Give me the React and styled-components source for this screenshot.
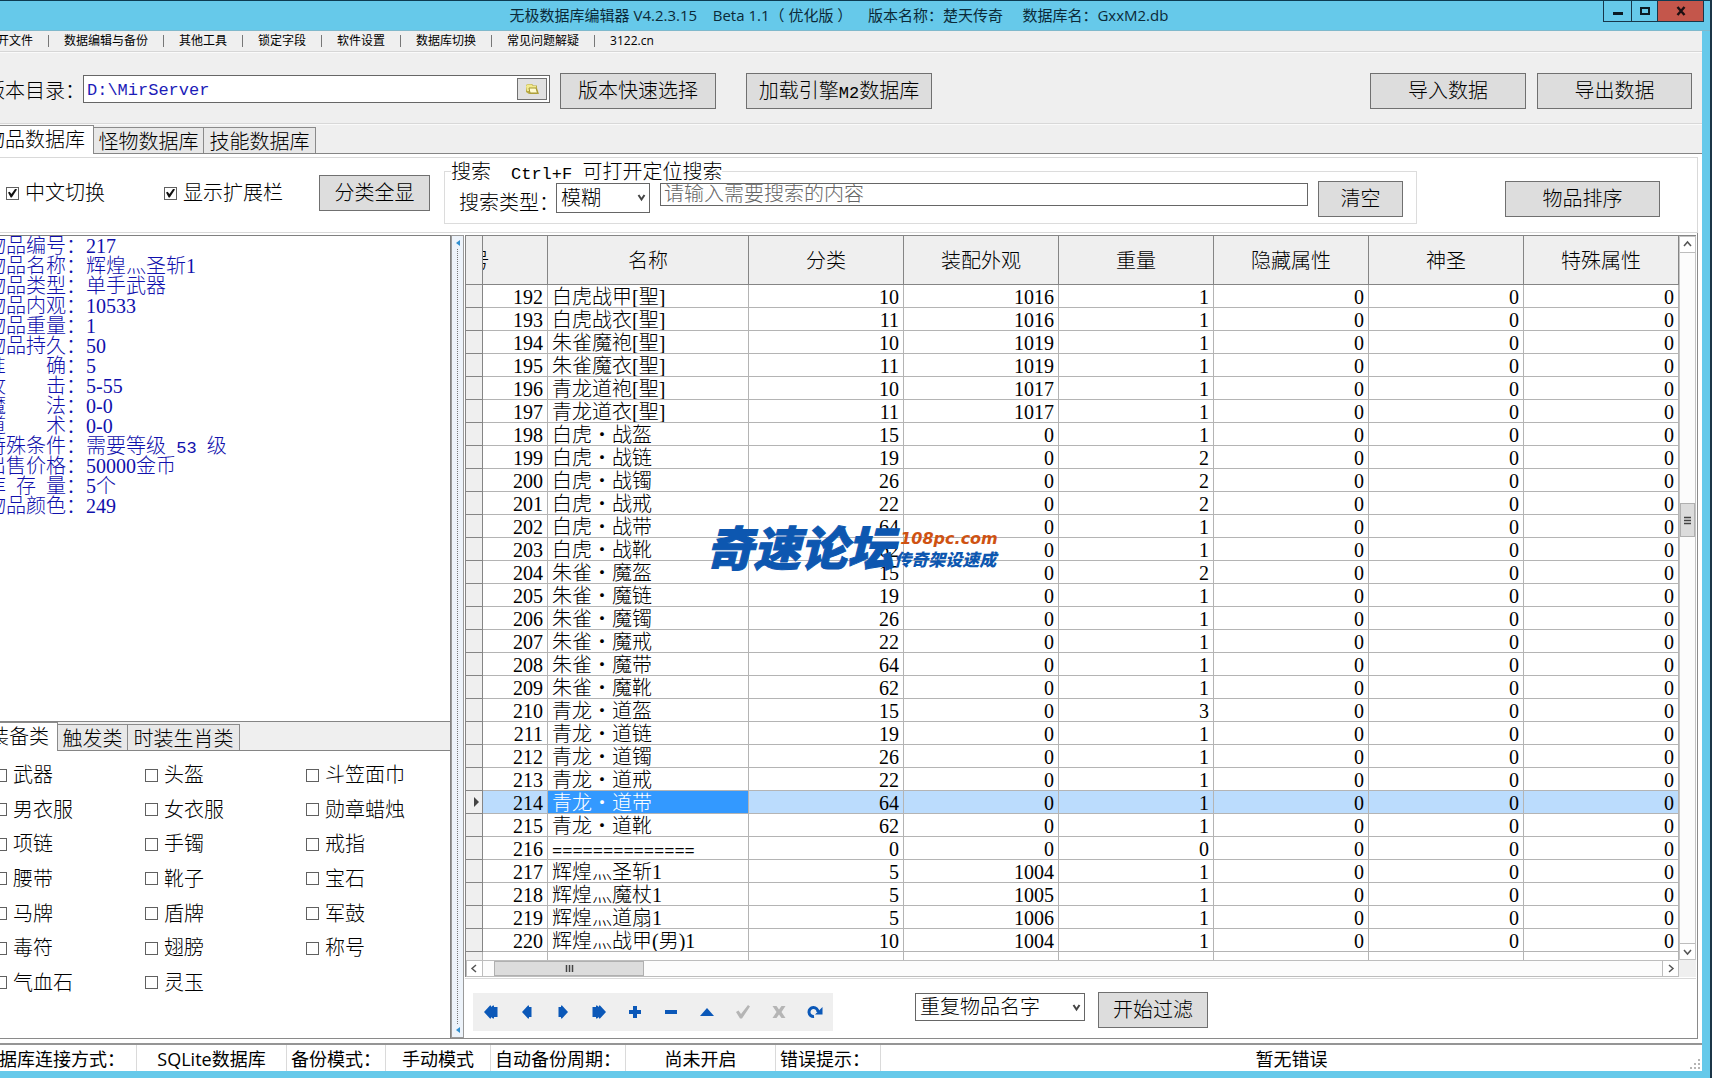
import React, { useState } from 'react';
import styled, { createGlobalStyle, css } from 'styled-components';

const song = '"Liberation Serif", "Noto Sans CJK SC", serif';
const ui = '"Open Sans", "Noto Sans CJK SC", sans-serif';
const mono = '"Liberation Mono", "Noto Sans CJK SC", monospace';

const GlobalStyle = createGlobalStyle`
  * { box-sizing: border-box; }
  body { margin: 0; background: #1b3547; overflow: hidden; }
  button, input, select { font: inherit; color: inherit; margin: 0; border-radius: 0; }
`;

/* ---------- window frame ---------- */

const Desktop = styled.div`
  position: relative;
  height: 100vh;
  padding-right: 2px;
  overflow: hidden;
  font: 300 20px/20px ${song};
  color: #000;
`;

const Frame = styled.div`
  display: flex;
  flex-direction: column;
  height: 100%;
  margin-left: -20px;
  padding: 0 8px 7px 0;
  background: #66c9ea;
  border-top: 1px solid #0d3b52;
`;

const TitleBar = styled.header`
  display: flex;
  flex: 0 0 30px;
  align-items: flex-start;
  margin-right: -8px;
  padding-right: 6px;
  border-bottom: 1px solid #7fb9cc;
`;

const Title = styled.h1`
  flex: 1;
  margin: 0;
  padding-left: 94px;
  font: 400 15px/29px ${ui};
  text-align: center;
  white-space: pre;
  color: #0b2a38;
`;

const WindowButton = styled.button`
  display: grid;
  place-items: center;
  width: ${(p) => p.$width}px;
  height: 21px;
  padding: 0;
  border: solid #17364a;
  border-width: 0 1px 1px;
  margin-left: -1px;
  background: ${(p) => (p.$danger ? '#c4564b' : 'transparent')};
`;

const Client = styled.div`
  display: flex;
  flex: 1;
  flex-direction: column;
  min-height: 0;
  background: #efefef;
`;

const MenuBar = styled.nav`
  display: flex;
  flex: 0 0 21px;
  align-items: center;
  padding-left: 5px;
  border-bottom: 1px solid #d6d6d6;
  font: 400 12px/20px ${ui};
`;

const MenuItem = styled.a`
  color: #000;
  text-decoration: none;
  white-space: nowrap;
  & + & {
    display: flex;
    align-items: center;
  }
  & + &::before {
    content: '';
    width: 1px;
    height: 12px;
    margin: 0 15px;
    background: #777;
  }
`;

/* ---------- common controls ---------- */

const Button = styled.button`
  flex: none;
  width: ${(p) => p.$width}px;
  height: 36px;
  padding: 0;
  border: 1px solid #707070;
  background: #dddddd;
  white-space: nowrap;
`;

const Mono = styled.span`
  font-family: ${mono};
  font-size: 17px;
  line-height: 0;
  white-space: pre;
`;

const Check = styled.label`
  display: flex;
  align-items: center;
  gap: 6px;
  white-space: nowrap;
`;

const Box = styled.input.attrs({ type: 'checkbox' })`
  appearance: none;
  display: grid;
  place-items: center;
  width: 13px;
  height: 13px;
  border: 1px solid #606060;
  background: #fff;
  &:checked::after {
    content: '';
    width: 9px;
    height: 9px;
    background: #111;
    clip-path: polygon(0 45%, 18% 35%, 38% 62%, 82% 0, 100% 10%, 42% 100%, 30% 100%);
  }
`;

const SelectBox = styled.span`
  display: grid;
  align-items: center;
  flex: none;
  width: ${(p) => p.$width}px;
  height: ${(p) => p.$height}px;
  select {
    grid-area: 1 / 1;
    appearance: none;
    width: 100%;
    height: 100%;
    padding: 0 20px 0 4px;
    border: 1px solid #666;
    background: #fff;
  }
  svg {
    grid-area: 1 / 1;
    justify-self: end;
    margin-right: 4px;
    pointer-events: none;
  }
`;

function Select({ width, height, label, options, id }) {
  return (
    <SelectBox $width={width} $height={height}>
      <select id={id} aria-label={label}>
        {options.map((o) => (
          <option key={o}>{o}</option>
        ))}
      </select>
      <svg width="9" height="9" viewBox="0 0 9 9" fill="none" stroke="#444" strokeWidth="2">
        <path d="M1.5 2 L4.5 6.5 L7.5 2" />
      </svg>
    </SelectBox>
  );
}

/* ---------- path row ---------- */

const Toolbar = styled.div`
  display: flex;
  flex: 0 0 72px;
  align-items: center;
  padding: 5px 10px 0 5px;
  border-top: 1px solid #fafafa;
  border-bottom: 1px solid #d8d8d8;
`;

const PathLabel = styled.label`
  flex: 0 0 98px;
  min-width: 0;
  white-space: nowrap;
`;

const PathField = styled.div`
  display: flex;
  flex: 0 0 467px;
  align-items: center;
  height: 28px;
  margin: 0 10px 4px 0;
  padding-right: 2px;
  border: 1px solid #666;
  background: #fff;
  input {
    flex: 1;
    min-width: 0;
    padding: 4px 3px 0;
    border: 0;
    outline: 0;
    font: 400 17px/20px ${mono};
    color: #1c1cb8;
  }
`;

const BrowseButton = styled.button`
  display: grid;
  place-items: center;
  width: 30px;
  height: 22px;
  padding: 0;
  border: 1px solid #707070;
  background: #e1e1e1;
`;

const Spacer = styled.div`
  flex: ${(p) => (p.$width ? `0 0 ${p.$width}px` : '1')};
`;

/* ---------- tabs ---------- */

const Tabs = styled.div`
  display: flex;
  flex: 0 0 30px;
  align-items: flex-end;
  border-bottom: 1px solid #858585;
  border-top: 1px solid ${(p) => (p.$sub ? '#858585' : '#fafafa')};
  background: #efefef;
`;

const Tab = styled.button`
  width: ${(p) => p.$width}px;
  height: 26px;
  padding: 2px 0 0;
  border: solid #8a8a8a;
  border-width: 1px 1px 0 0;
  background: #e8e8e8;
  text-align: center;
  white-space: nowrap;
  ${(p) =>
    p.$active &&
    css`
      height: 29px;
      margin-bottom: -1px;
      padding: 0 8px 1px 0;
      background: #fff;
      text-align: right;
    `}
`;

/* ---------- search panel ---------- */

const Page = styled.main`
  display: flex;
  flex: 1;
  flex-direction: column;
  min-height: 0;
  padding: 3px 4px 4px 0;
  background: #fff;
`;

const SearchPanel = styled.section`
  display: flex;
  flex: 0 0 76px;
  align-items: center;
  padding: 0 37px 4px 26px;
  border: solid #d9d9d9;
  border-width: 1px 1px 1px 0;
`;

const SearchGroup = styled.fieldset`
  flex: 1;
  min-width: 0;
  height: 61px;
  margin: 0 88px 0 14px;
  padding: 0 13px 0 6px;
  border: 1px solid #dcdcdc;
  legend {
    padding: 0;
    line-height: 18px;
    white-space: nowrap;
  }
`;

const SearchRow = styled.div`
  display: flex;
  align-items: flex-start;
  padding-left: 8px;
  label {
    flex: 0 0 97px;
    min-width: 0;
    padding-top: 12px;
    white-space: nowrap;
  }
  ${SelectBox} {
    margin-top: 2px;
  }
`;

const SearchInput = styled.input`
  flex: 1;
  min-width: 0;
  height: 23px;
  margin: 2px 10px 0;
  padding: 0 3px;
  border: 1px solid #666;
  &::placeholder {
    color: #666;
    opacity: 1;
  }
`;

const SortSlot = styled.div`
  padding-top: 12px;
`;

/* ---------- body ---------- */

const Workspace = styled.div`
  display: grid;
  flex: 1;
  grid-template-columns: 471px 13px minmax(0, 1fr);
  min-height: 0;
  padding-top: 2px;
  border: solid #8a8a8a;
  border-width: 0 1px 1px 0;
`;

const Side = styled.aside`
  display: flex;
  flex-direction: column;
  min-height: 0;
  border: solid #808080;
  border-width: 1px 1px 0 0;
`;

const Details = styled.dl`
  flex: 1;
  margin: 0;
  padding-left: 6px;
  color: #1010ac;
  div {
    display: flex;
  }
  dt {
    display: flex;
    flex: 0 0 100px;
  }
  dt span {
    width: 80px;
    text-align-last: justify;
  }
  dd {
    margin: 0;
    white-space: nowrap;
  }
`;

const Categories = styled.div`
  display: grid;
  flex: 0 0 287px;
  grid-template-columns: 151px 161px 1fr;
  grid-template-rows: repeat(7, 1fr);
  align-items: center;
  padding: 7px 0 38px 14px;
`;

const Splitter = styled.div`
  display: flex;
  flex-direction: column;
  align-items: center;
  justify-content: space-between;
  padding: 4px 0;
  border: 1px solid #9a9a9a;
  background: #edf3fa;
  &::before,
  &::after {
    content: '';
    border: solid transparent;
    border-width: 3px 4px 3px 0;
    border-right-color: #2f8fd0;
  }
`;

const DottedLine = styled.div`
  flex: 1;
  margin: 3px 0;
  border-left: 1px dotted #777;
`;

const GridPane = styled.section`
  display: flex;
  flex-direction: column;
  min-width: 0;
  min-height: 0;
  padding: 0 1px 0 1px;
`;

const GridArea = styled.div`
  display: grid;
  flex: 1;
  grid-template: minmax(0, 1fr) 17px / minmax(0, 1fr) 17px;
  min-height: 0;
  border-top: 1px solid #858585;
  border-left: 1px solid #858585;
`;

const Viewport = styled.div`
  overflow: hidden;
  background: linear-gradient(#efefef, #efefef) 0 0 / 16px 100% no-repeat;
`;

const Table = styled.table`
  width: 100%;
  table-layout: fixed;
  border-collapse: separate;
  border-spacing: 0;
  th {
    height: 49px;
    padding: 1px 0 0;
    border: solid #858585;
    border-width: 0 1px 1px 0;
    background: #efefef;
    font-weight: inherit;
    overflow: hidden;
    white-space: nowrap;
  }
`;

const Column = styled.col`
  width: ${(p) => (p.$width ? `${p.$width}px` : 'auto')};
`;

const ScrolledHeading = styled.div`
  display: flex;
  justify-content: flex-end;
  overflow: hidden;
  span {
    flex: 0 0 155px;
    text-align: center;
  }
`;

const Cell = styled.td`
  height: 23px;
  padding: 2px 4px 0;
  border: solid #b4b4b4;
  border-width: 0 1px 1px 0;
  background: ${(p) => (p.$selected ? '#bbdcfd' : '#fff')};
  text-align: ${(p) => (p.$text ? 'left' : 'right')};
  line-height: 20px;
  white-space: nowrap;
  overflow: hidden;
  ${(p) =>
    p.$focused &&
    css`
      background: #3399ff;
      color: #fff;
    `}
`;

const Indicator = styled(Cell)`
  padding: 0 0 0 8px;
  border-color: #858585;
  background: #efefef;
  svg {
    display: block;
  }
`;

const Tail = styled.td`
  height: 8px;
  padding: 0;
  border-right: 1px solid #b4b4b4;
`;

const VScroll = styled.div`
  display: flex;
  flex-direction: column;
  border: 1px solid #c4c4c4;
  background: #fcfcfc;
`;

const HScroll = styled.div`
  display: flex;
  border: 1px solid #bdbdbd;
  background: #fcfcfc;
`;

const ScrollButton = styled.button`
  display: grid;
  flex: 0 0 16px;
  place-items: center;
  padding: 0;
  border: 0 solid #bdbdbd;
  border-width: ${(p) => p.$edge};
  background: #fff;
`;

const Thumb = styled.div`
  display: grid;
  flex: 0 0 ${(p) => p.$size}px;
  place-items: center;
  border: 1px solid #b0b0b0;
  background: #dcdcdc;
`;

const Corner = styled.div`
  background: #efefef;
`;

const Footer = styled.div`
  display: flex;
  flex: 0 0 60px;
  align-items: flex-start;
  margin-top: 1px;
  padding: 13px 0 0 8px;
  border-top: 1px solid #d9d9d9;
`;

const Navigator = styled.div`
  display: flex;
  flex: none;
  margin: 1px 82px 0 0;
  background: #efefef;
`;

const NavButton = styled.button`
  display: grid;
  place-items: center;
  width: 36px;
  height: 38px;
  padding: 0;
  border: 0;
  background: transparent;
  color: ${(p) => (p.disabled ? '#b5b5b5' : '#0b58b8')};
`;

const FilterSlot = styled.div`
  padding: 1px 13px 0 0;
`;

/* ---------- status bar ---------- */

const StatusBar = styled.footer`
  display: flex;
  flex: 0 0 28px;
  min-height: 0;
  border-top: 2px solid #959595;
  background: #fff;
  font: 400 18px/28px ${ui};
`;

const StatusCell = styled.div`
  flex: ${(p) => (p.$width ? `0 0 ${p.$width}px` : '1')};
  padding-left: ${(p) => (p.$center ? 0 : p.$first ? 1 : 4)}px;
  border-right: ${(p) => (p.$width ? '1px solid #dadada' : '0')};
  text-align: ${(p) => (p.$center ? 'center' : 'left')};
  white-space: nowrap;
  overflow: hidden;
`;

const Grip = styled.svg`
  align-self: flex-end;
  flex: none;
  margin-left: -12px;
`;

/* ---------- watermark ---------- */

const Watermark = styled.div`
  position: absolute;
  top: 50%;
  left: 50%;
  display: flex;
  align-items: center;
  transform: translate(-50%, -17px);
  padding-right: 8px;
  font-family: "Noto Sans CJK SC", sans-serif;
  font-weight: 900;
  font-style: italic;
  color: #0d57b0;
  white-space: nowrap;
  pointer-events: none;
`;

const MarkName = styled.strong`
  font-size: 47px;
  line-height: 48px;
  font-weight: 900;
  -webkit-text-stroke: 1px #0d57b0;
`;

const MarkSide = styled.div`
  padding-top: 6px;
  font-size: 17px;
  line-height: 20px;
  b {
    display: block;
    padding-left: 6px;
    font: italic 700 16px/20px "DejaVu Sans", sans-serif;
    color: #cf5212;
  }
`;

/* ---------- data ---------- */

const menu = ['打开文件', '数据编辑与备份', '其他工具', '锁定字段', '软件设置', '数据库切换', '常见问题解疑', '3122.cn'];

const details = [
  ['物品编号', '217'],
  ['物品名称', '辉煌灬圣斩1'],
  ['物品类型', '单手武器'],
  ['物品内观', '10533'],
  ['物品重量', '1'],
  ['物品持久', '50'],
  ['准 确', '5'],
  ['攻 击', '5-55'],
  ['魔 法', '0-0'],
  ['道 术', '0-0'],
  ['特殊条件', <>需要等级<Mono> 53 </Mono>级</>],
  ['出售价格', '50000金币'],
  ['库 存 量', '5个'],
  ['物品颜色', '249'],
];

const categories = [
  '武器', '头盔', '斗笠面巾',
  '男衣服', '女衣服', '勋章蜡烛',
  '项链', '手镯', '戒指',
  '腰带', '靴子', '宝石',
  '马牌', '盾牌', '军鼓',
  '毒符', '翅膀', '称号',
  '气血石', '灵玉',
];

const headings = ['名称', '分类', '装配外观', '重量', '隐藏属性', '神圣', '特殊属性'];

const items = [
  ['白虎战甲[聖]', 10, 1016, 1],
  ['白虎战衣[聖]', 11, 1016, 1],
  ['朱雀魔袍[聖]', 10, 1019, 1],
  ['朱雀魔衣[聖]', 11, 1019, 1],
  ['青龙道袍[聖]', 10, 1017, 1],
  ['青龙道衣[聖]', 11, 1017, 1],
  ['白虎・战盔', 15, 0, 1],
  ['白虎・战链', 19, 0, 2],
  ['白虎・战镯', 26, 0, 2],
  ['白虎・战戒', 22, 0, 2],
  ['白虎・战带', 64, 0, 1],
  ['白虎・战靴', 62, 0, 1],
  ['朱雀・魔盔', 15, 0, 2],
  ['朱雀・魔链', 19, 0, 1],
  ['朱雀・魔镯', 26, 0, 1],
  ['朱雀・魔戒', 22, 0, 1],
  ['朱雀・魔带', 64, 0, 1],
  ['朱雀・魔靴', 62, 0, 1],
  ['青龙・道盔', 15, 0, 3],
  ['青龙・道链', 19, 0, 1],
  ['青龙・道镯', 26, 0, 1],
  ['青龙・道戒', 22, 0, 1],
  ['青龙・道带', 64, 0, 1],
  ['青龙・道靴', 62, 0, 1],
  ['==============', 0, 0, 0],
  ['辉煌灬圣斩1', 5, 1004, 1],
  ['辉煌灬魔杖1', 5, 1005, 1],
  ['辉煌灬道扇1', 5, 1006, 1],
  ['辉煌灬战甲(男)1', 10, 1004, 1],
].map(([name, ...rest], i) => ({ id: 192 + i, name, values: [...rest, 0, 0, 0] }));

const navIcons = [
  ['首条', <path key="p" d="M1 8 L7 1.500 H8 V3 L10 1.500 H11 V3 H14.500 V13 H11 V14.500 H10 L8 13 V14.500 H7 Z" />],
  ['上一条', <path key="p" d="M3 8 L9 1.500 H10 V3 H12.500 V13 H10 V14.500 H9 Z" />],
  ['下一条', <path key="p" d="M13 8 L7 1.500 H6 V3 H3.500 V13 H6 V14.500 H7 Z" />],
  ['末条', <path key="p" d="M15 8 L9 1.500 H8 V3 L6 1.500 H5 V3 H1.500 V13 H5 V14.500 H6 L8 13 V14.500 H9 Z" />],
  ['新增', <path key="p" d="M6 2 H10 V6 H14 V10 H10 V14 H6 V10 H2 V6 H6 Z" />],
  ['删除', <path key="p" d="M2 6 H14 V10 H2 Z" />],
  ['编辑', <path key="p" d="M1 12 L8 4 L15 12 Z" />],
  ['保存', <path key="p" d="M1 8 L3.500 6.500 L6 10 L13 1 L15 2.500 L7 14.500 H5 Z" />, true],
  ['取消', <path key="p" d="M1.500 2 H5.500 L8 5.500 L10.500 2 H14.500 L10.500 8 L14.500 14 H10.500 L8 10.500 L5.500 14 H1.500 L5.500 8 Z" />, true],
  [
    '刷新',
    <React.Fragment key="p">
      <path d="M7 12.500 A4.500 4.500 0 1 1 11 8" fill="none" stroke="currentColor" strokeWidth="3" />
      <path d="M15.500 3 V10.500 H8 Z" />
    </React.Fragment>,
  ],
];

const chevrons = {
  up: 'M1 6 L4.500 2 L8 6',
  down: 'M1 3 L4.500 7 L8 3',
  left: 'M6 1 L2 4.500 L6 8',
  right: 'M3 1 L7 4.500 L3 8',
};

function Chevron({ to }) {
  return (
    <svg width="9" height="9" viewBox="0 0 9 9" fill="none" stroke="#555" strokeWidth="1.5">
      <path d={chevrons[to]} />
    </svg>
  );
}

export default function App() {
  const [path, setPath] = useState('D:\\MirServer');
  const [selected, setSelected] = useState(214);

  return (
    <Desktop>
      <GlobalStyle />
      <Frame>
        <TitleBar>
          <Title>无极数据库编辑器 V4.2.3.15{'    '}Beta 1.1（ 优化版 ）{'    '}版本名称：楚天传奇{'     '}数据库名：GxxM2.db</Title>
          <WindowButton $width={29} aria-label="最小化">
            <svg width="12" height="12" viewBox="0 0 12 12"><path d="M1 7 H11 V10 H1 Z" fill="#0b1a24" /></svg>
          </WindowButton>
          <WindowButton $width={27} aria-label="最大化">
            <svg width="12" height="12" viewBox="0 0 12 12"><path d="M2 3 H10 V9 H2 Z" fill="none" stroke="#0b1a24" strokeWidth="2" /></svg>
          </WindowButton>
          <WindowButton $width={47} $danger aria-label="关闭">
            <svg width="12" height="12" viewBox="0 0 12 12"><path d="M2.500 2 L9.500 10 M9.500 2 L2.500 10" stroke="#1c0f12" strokeWidth="2.400" /></svg>
          </WindowButton>
        </TitleBar>

        <Client>
          <MenuBar>
            {menu.map((m) => (
              <MenuItem key={m} href="#">{m}</MenuItem>
            ))}
          </MenuBar>

          <Toolbar>
            <PathLabel htmlFor="path">版本目录：</PathLabel>
            <PathField>
              <input id="path" value={path} onChange={(e) => setPath(e.target.value)} />
              <BrowseButton aria-label="浏览">
                <svg width="15" height="12" viewBox="0 0 15 12">
                  <path d="M1 9 V2 L3 1 H7 L8.500 2.500 H12 V5 L14 11 H4 Z" fill="#b9ab45" />
                  <path d="M1 3 L2.500 1.500 H6.500 L8 3 H11 V8 H2 Z" fill="#f2ea8f" />
                  <path d="M4 5 H11 L12.500 10 H5 Z" fill="#fffbd0" stroke="#a49633" />
                </svg>
              </BrowseButton>
            </PathField>
            <Button $width={156}>版本快速选择</Button>
            <Spacer $width={30} />
            <Button $width={186}>加载引擎<Mono>M2</Mono>数据库</Button>
            <Spacer />
            <Button $width={156}>导入数据</Button>
            <Spacer $width={11} />
            <Button $width={155}>导出数据</Button>
          </Toolbar>

          <Tabs>
            <Tab $active $width={114}>物品数据库</Tab>
            <Tab $width={110}>怪物数据库</Tab>
            <Tab $width={112}>技能数据库</Tab>
          </Tabs>

          <Page>
            <SearchPanel>
              <Check><Box defaultChecked />中文切换</Check>
              <Spacer $width={59} />
              <Check><Box defaultChecked />显示扩展栏</Check>
              <Spacer $width={36} />
              <Button $width={111}>分类全显</Button>
              <SearchGroup>
                <legend>搜索　<Mono>Ctrl+F </Mono>可打开定位搜索</legend>
                <SearchRow>
                  <label htmlFor="kind">搜索类型：</label>
                  <Select id="kind" width={94} height={30} options={['模糊', '精确']} />
                  <SearchInput aria-label="搜索内容" placeholder="请输入需要搜索的内容" />
                  <Button $width={85}>清空</Button>
                </SearchRow>
              </SearchGroup>
              <SortSlot>
                <Button $width={155}>物品排序</Button>
              </SortSlot>
            </SearchPanel>

            <Workspace>
              <Side>
                <Details>
                  {details.map(([k, v]) => (
                    <div key={k}>
                      <dt><span>{k}</span>：</dt>
                      <dd>{v}</dd>
                    </div>
                  ))}
                </Details>
                <Tabs $sub>
                  <Tab $active $width={78}>装备类</Tab>
                  <Tab $width={70}>触发类</Tab>
                  <Tab $width={112}>时装生肖类</Tab>
                </Tabs>
                <Categories>
                  {categories.map((c) => (
                    <Check key={c}><Box />{c}</Check>
                  ))}
                </Categories>
              </Side>

              <Splitter><DottedLine /></Splitter>

              <GridPane>
                <GridArea>
                  <Viewport>
                    <Table>
                      <colgroup>
                        <Column $width={17} />
                        <Column $width={65} />
                        <Column $width={201} />
                        {headings.slice(1).map((h) => <Column key={h} />)}
                      </colgroup>
                      <thead>
                        <tr>
                          <th />
                          <th><ScrolledHeading><span>编号</span></ScrolledHeading></th>
                          {headings.map((h) => <th key={h}>{h}</th>)}
                        </tr>
                      </thead>
                      <tbody>
                        {items.map((it) => {
                          const on = it.id === selected;
                          return (
                            <tr key={it.id} onClick={() => setSelected(it.id)}>
                              <Indicator>
                                {on && <svg width="5" height="10" viewBox="0 0 5 10"><path d="M0 0 L5 5 L0 10 Z" fill="#444" /></svg>}
                              </Indicator>
                              <Cell $selected={on}>{it.id}</Cell>
                              <Cell $text $focused={on}>
                                {it.name.startsWith('=') ? <Mono>{it.name}</Mono> : it.name}
                              </Cell>
                              {it.values.map((v, i) => <Cell key={headings[i + 1]} $selected={on}>{v}</Cell>)}
                            </tr>
                          );
                        })}
                        <tr>
                          {['标', '号', ...headings].map((h) => <Tail key={h} />)}
                        </tr>
                      </tbody>
                    </Table>
                  </Viewport>
                  <VScroll>
                    <ScrollButton $edge="0 0 1px" aria-label="向上"><Chevron to="up" /></ScrollButton>
                    <Spacer $width={250} />
                    <Thumb $size={34}>
                      <svg width="7" height="9" viewBox="0 0 7 9"><path d="M0 1.500 H7 M0 4.500 H7 M0 7.500 H7" stroke="#444" strokeWidth="1.500" /></svg>
                    </Thumb>
                    <Spacer />
                    <ScrollButton $edge="1px 0 0" aria-label="向下"><Chevron to="down" /></ScrollButton>
                  </VScroll>
                  <HScroll>
                    <ScrollButton $edge="0 1px 0 0" aria-label="向左"><Chevron to="left" /></ScrollButton>
                    <Spacer $width={11} />
                    <Thumb $size={150}>
                      <svg width="9" height="7" viewBox="0 0 9 7"><path d="M1.500 0 V7 M4.500 0 V7 M7.500 0 V7" stroke="#444" strokeWidth="1.500" /></svg>
                    </Thumb>
                    <Spacer />
                    <ScrollButton $edge="0 0 0 1px" aria-label="向右"><Chevron to="right" /></ScrollButton>
                  </HScroll>
                  <Corner />
                </GridArea>

                <Footer>
                  <Navigator>
                    {navIcons.map(([label, icon, disabled]) => (
                      <NavButton key={label} aria-label={label} disabled={disabled}>
                        <svg width="16" height="16" viewBox="0 0 16 16" fill="currentColor">{icon}</svg>
                      </NavButton>
                    ))}
                  </Navigator>
                  <FilterSlot>
                    <Select width={170} height={28} label="过滤条件" options={['重复物品名字', '重复物品编号']} />
                  </FilterSlot>
                  <Button $width={110}>开始过滤</Button>
                </Footer>
              </GridPane>
            </Workspace>
          </Page>

          <StatusBar>
            <StatusCell $first $width={157}>数据库连接方式：</StatusCell>
            <StatusCell $center $width={150}>SQLite数据库</StatusCell>
            <StatusCell $width={99}>备份模式：</StatusCell>
            <StatusCell $center $width={105}>手动模式</StatusCell>
            <StatusCell $width={135}>自动备份周期：</StatusCell>
            <StatusCell $center $width={150}>尚未开启</StatusCell>
            <StatusCell $width={105}>错误提示：</StatusCell>
            <StatusCell $center>暂无错误</StatusCell>
            <Grip width="12" height="12" viewBox="0 0 12 12" fill="#b5b5b5">
              <path d="M8 0h2v2h-2z M8 4h2v2h-2z M4 4h2v2h-2z M8 8h2v2h-2z M4 8h2v2h-2z M0 8h2v2h-2z" />
            </Grip>
          </StatusBar>
        </Client>
      </Frame>

      <Watermark>
        <MarkName>奇速论坛</MarkName>
        <MarkSide>
          <b>108pc.com</b>
          传奇架设速成
        </MarkSide>
      </Watermark>
    </Desktop>
  );
}
